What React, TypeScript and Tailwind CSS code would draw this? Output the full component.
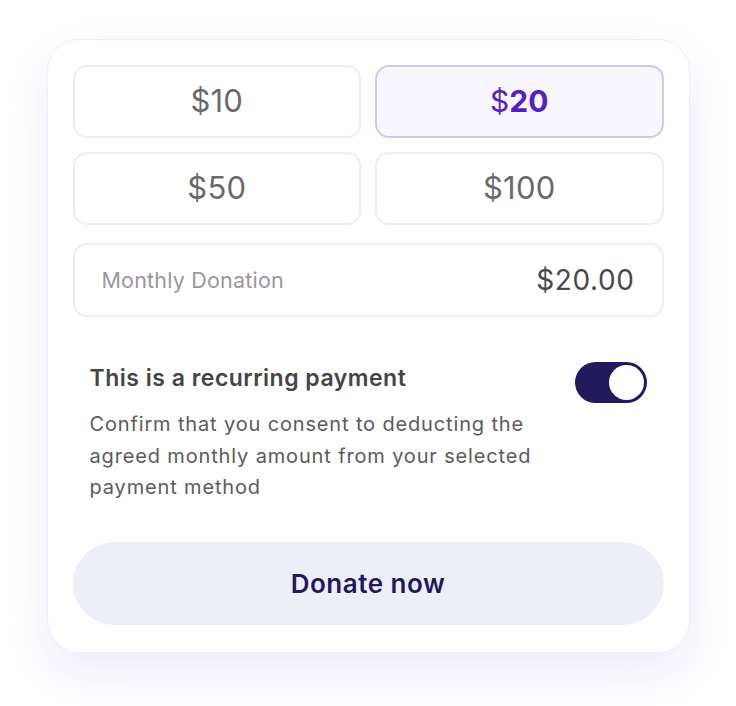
import React from "react";

export default function App() {
  const amounts = ["$10", "$20", "$50", "$100"];
  return (
    <div className="min-h-[706px] w-[736px] bg-white flex justify-center pt-[39px]" style={{ fontFamily: "Inter, 'Noto Sans', sans-serif" }}>
      <div className="w-[643px] h-[614px] rounded-[32px] bg-[#fefeff] border border-[#f1eefb] shadow-[0_18px_48px_rgba(125,95,240,0.13)] px-[25px] pt-[25px]">
        <div className="grid grid-cols-2 gap-x-[14px] gap-y-[14px]">
          {amounts.map((a) => {
            const sel = a === "$20";
            return (
              <div
                key={a}
                className={
                  sel
                    ? "h-[73px] rounded-[14px] border-2 border-[#d3c6f7] bg-[#f8f7ff] flex items-center justify-center text-[30px] font-bold text-[#5720c2]"
                    : "h-[73px] rounded-[14px] border-2 border-[#eeedf1] bg-white flex items-center justify-center text-[31px] font-normal text-[#6a6a6a] tracking-[0.2px]"
                }
              >
                {sel ? (
                  <span>
                    <span className="font-normal">$</span>20
                  </span>
                ) : (
                  a
                )}
              </div>
            );
          })}
        </div>
        <div className="mt-[18px] h-[74px] rounded-[14px] border-2 border-[#eeedf1] bg-white flex items-center justify-between pl-[27px] pr-[27px]">
          <span className="text-[21.5px] text-[#9a979d] tracking-[0.2px]">Monthly Donation</span>
          <span className="text-[28px] text-[#4a4a4a] tracking-[0.6px]">$20.00</span>
        </div>
        <div className="mt-[47px] px-[17px] flex justify-between items-start">
          <div>
            <div className="text-[23px] leading-[28px] font-semibold text-[#454545] tracking-[0.5px]">This is a recurring payment</div>
            <div className="mt-[17px] w-[460px] text-[20px] leading-[31.5px] text-[#5b5b5b] tracking-[0.85px]">
              Confirm that you consent to deducting the agreed monthly amount from your selected payment method
            </div>
          </div>
          <div className="mt-[-2px] w-[72px] h-[41px] rounded-full bg-[#231a5c] flex items-center justify-end pr-[3px]">
            <div className="w-[35px] h-[35px] rounded-full bg-white" />
          </div>
        </div>
        <div className="mt-[38px] h-[83px] rounded-full bg-[#eeeef9] flex items-center justify-center text-[26px] font-semibold text-[#1f1a5a] tracking-[0.5px]">
          Donate now
        </div>
      </div>
    </div>
  );
}
